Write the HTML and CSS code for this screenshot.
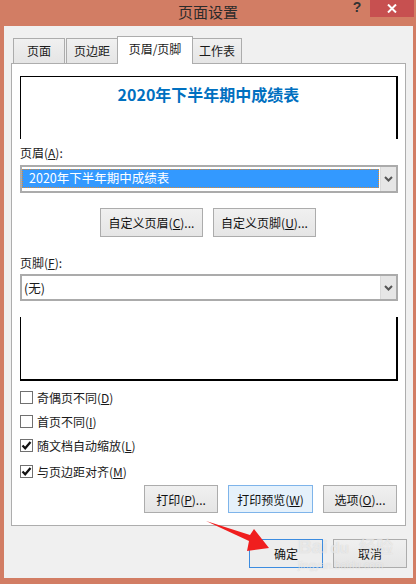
FILE: index.html
```html
<!DOCTYPE html>
<html lang="zh-CN">
<head>
<meta charset="utf-8">
<title>页面设置</title>
<link rel="stylesheet" href="styles.css">
</head>
<body>
<div class="window">
  <div class="titlebar">
    <div class="tb-side"></div>
    <div class="title">页面设置</div>
    <div class="tb-controls">
      <span class="help">?</span>
      <span class="close">
        <svg width="10" height="9" viewBox="0 0 10 9"><path d="M1 0.5 L9 8.5 M9 0.5 L1 8.5" stroke="#fff" stroke-width="2" fill="none"/></svg>
      </span>
    </div>
  </div>
  <div class="client">
    <div class="tabs">
      <div class="tab t1">页面</div>
      <div class="tab t2">页边距</div>
      <div class="tab active">页眉/页脚</div>
      <div class="tab t4">工作表</div>
    </div>
    <div class="panel">
      <div class="preview header-preview">2020年下半年期中成绩表</div>
      <div class="label">页眉(<u>A</u>):</div>
      <div class="select">
        <div class="sel-value highlighted">2020年下半年期中成绩表</div>
        <div class="drop">
          <svg width="9" height="6" viewBox="0 0 9 6"><path d="M1 1 L4.5 4.5 L8 1" stroke="#555" stroke-width="2" fill="none"/></svg>
        </div>
      </div>
      <div class="custom-row">
        <div class="btn custom">自定义页眉(<u>C</u>)...</div>
        <div class="btn custom">自定义页脚(<u>U</u>)...</div>
      </div>
      <div class="label label-footer">页脚(<u>F</u>):</div>
      <div class="select select-footer">
        <div class="sel-value plain">(无)</div>
        <div class="drop">
          <svg width="9" height="6" viewBox="0 0 9 6"><path d="M1 1 L4.5 4.5 L8 1" stroke="#555" stroke-width="2" fill="none"/></svg>
        </div>
      </div>
      <div class="preview footer-preview"></div>
      <div class="checks">
        <div class="check"><span class="box"></span><span>奇偶页不同(<u>D</u>)</span></div>
        <div class="check"><span class="box"></span><span>首页不同(<u>I</u>)</span></div>
        <div class="check"><span class="box"><svg width="11" height="11" viewBox="0 0 11 11"><path d="M1.5 5.5 L4.2 8.3 L9.5 2" stroke="#111" stroke-width="2.2" fill="none"/></svg></span><span>随文档自动缩放(<u>L</u>)</span></div>
        <div class="check"><span class="box"><svg width="11" height="11" viewBox="0 0 11 11"><path d="M1.5 5.5 L4.2 8.3 L9.5 2" stroke="#111" stroke-width="2.2" fill="none"/></svg></span><span>与页边距对齐(<u>M</u>)</span></div>
      </div>
      <div class="panel-buttons">
        <div class="btn pb">打印(<u>P</u>)...</div>
        <div class="btn pb pb-blue">打印预览(<u>W</u>)</div>
        <div class="btn pb">选项(<u>O</u>)...</div>
      </div>
    </div>
    <div class="dlg-buttons">
      <div class="btn dlg ok">确定</div>
      <div class="btn dlg">取消</div>
    </div>
  </div>
  <svg class="arrow" width="416" height="584" viewBox="0 0 416 584">
    <polygon points="206,521 250,535 254,529 269,548 247,551 249,541" fill="#F01E1E"/>
  </svg>
  <div class="watermark">
    <div class="wm-top"><span class="wm-bai">Bai</span><span class="wm-du">du</span><span class="wm-jy">经验</span></div>
    <div class="wm-url">jingyan.baidu.com</div>
  </div>
</div>
</body>
</html>
```
FILE: styles.css
```css
* { box-sizing: border-box; }
html, body { margin: 0; padding: 0; }
body {
  width: 416px;
  height: 584px;
  background: #D27D64;
  font-family: "Noto Sans CJK SC", "Noto Sans", sans-serif;
  font-size: 12px;
  color: #1a1a1a;
  overflow: hidden;
}
u { text-decoration: underline; text-underline-offset: 1px; }
.window {
  position: relative;
  width: 416px;
  height: 584px;
}
.titlebar {
  height: 26px;
  display: grid;
  grid-template-columns: 90px 1fr 90px;
  align-items: start;
}
.title {
  text-align: center;
  font-size: 15px;
  line-height: 24px;
  color: #2b2b2b;
}
.tb-controls {
  display: flex;
  justify-content: flex-end;
  padding-right: 2px;
}
.help {
  width: 26px;
  text-align: center;
  font-family: "Liberation Sans", sans-serif;
  font-weight: bold;
  font-size: 14px;
  line-height: 15px;
  color: #333;
}
.close {
  width: 44px;
  height: 17px;
  background: #C75050;
  display: flex;
  align-items: center;
  justify-content: center;
}
.client {
  margin: 0 3px 0 4px;
  height: 552px;
  background: #F0F0F0;
  padding-top: 10px;
}
.tabs {
  display: flex;
  align-items: flex-end;
  height: 27px;
  padding-left: 9px;
}
.tab {
  height: 25px;
  border: 1px solid #ACACAC;
  border-bottom: none;
  background: linear-gradient(#F0F0F0, #E5E5E5);
  text-align: center;
  line-height: 24px;
}
.t1 { width: 52px; margin-right: 1px; }
.t2 { width: 52px; }
.tab.active {
  width: 76px;
  height: 28px;
  margin-left: -1px;
  margin-bottom: -1px;
  background: #fff;
  line-height: 24px;
  position: relative;
  z-index: 1;
}
.t4 { width: 50px; margin-left: -1px; }
.panel {
  margin-left: 7px;
  width: 395px;
  height: 463px;
  background: #fff;
  border: 1px solid #ADADAD;
  padding: 12px 7px 0 8px;
}
.preview {
  border-left: 1px solid #000;
}
.header-preview {
  height: 63px;
  border-top: 1px solid #000;
  border-right: 2px solid #000;
  text-align: center;
  color: #0070C0;
  font-weight: bold;
  font-size: 16px;
  line-height: 22px;
  padding-top: 6px;
}
.label {
  margin-top: 6px;
  height: 16px;
  line-height: 16px;
  font-size: 12px;
}
.label-footer { margin-top: 18px; }
.select {
  margin-top: 4px;
  height: 28px;
  border: 2px solid #ABABAB;
  display: flex;
  background: #fff;
}
.select-footer { margin-top: 3px; height: 27px; }
.sel-value {
  flex: 1;
  font-size: 12.5px;
}
.highlighted {
  margin: 2px 1px 3px 0;
  background: #3399FF;
  color: #fff;
  outline: 1px dotted #E08A30;
  outline-offset: -1px;
  line-height: 18px;
  padding-left: 7px;
}
.plain {
  line-height: 23px;
  padding-left: 2px;
}
.drop {
  width: 16px;
  background: #E6E6E6;
  border-left: 1px solid #D9D9D9;
  display: flex;
  align-items: center;
  justify-content: center;
}
.btn {
  border: 1px solid #ACACAC;
  background: linear-gradient(#F0F0F0, #E5E5E5);
  display: flex;
  align-items: center;
  justify-content: center;
  font-size: 12px;
  color: #111;
}
.custom-row {
  margin-top: 15px;
  display: flex;
  justify-content: center;
  gap: 10px;
  padding-right: 2px;
}
.custom { width: 103px; height: 29px; }
.footer-preview {
  margin-top: 16px;
  height: 64px;
  border-bottom: 2px solid #000;
  border-right: 2px solid #000;
}
.checks {
  margin-top: 4px;
}
.check {
  height: 24px;
  display: flex;
  align-items: center;
  gap: 4px;
}
.check:last-child { height: 26px; padding-top: 2px; }
.box {
  width: 13px;
  height: 13px;
  border: 1px solid #707070;
  background: #fff;
  display: flex;
  align-items: center;
  justify-content: center;
}
.panel-buttons {
  margin-top: 2px;
  display: flex;
  justify-content: flex-end;
  gap: 10px;
  padding-right: 1px;
}
.pb { height: 28px; width: 74px; }
.pb-blue {
  width: 85px;
  background: #E5F1FB;
  border-color: #7EB4EA;
}
.dlg-buttons {
  margin-top: 13px;
  display: flex;
  justify-content: flex-end;
  gap: 10px;
  padding-right: 6px;
}
.dlg { width: 74px; height: 29px; }
.ok { border-color: #3C8CE0; background: #EDEDED; }
.arrow {
  position: absolute;
  left: 0;
  top: 0;
  pointer-events: none;
}
.watermark {
  position: absolute;
  left: 298px;
  top: 536px;
  width: 100px;
  pointer-events: none;
  color: rgba(255, 255, 255, 0.55);
  text-shadow: 0 0 1px rgba(160, 160, 160, 0.45);
  font-family: "Liberation Sans", "Noto Sans CJK SC", sans-serif;
}
.wm-top {
  display: flex;
  align-items: baseline;
  font-size: 19px;
  font-weight: bold;
  line-height: 22px;
}
.wm-du { font-size: 15px; margin-left: 3px; }
.wm-jy { font-size: 17px; margin-left: 10px; font-weight: normal; }
.wm-url {
  font-size: 10px;
  line-height: 14px;
  letter-spacing: 0.3px;
}
```
